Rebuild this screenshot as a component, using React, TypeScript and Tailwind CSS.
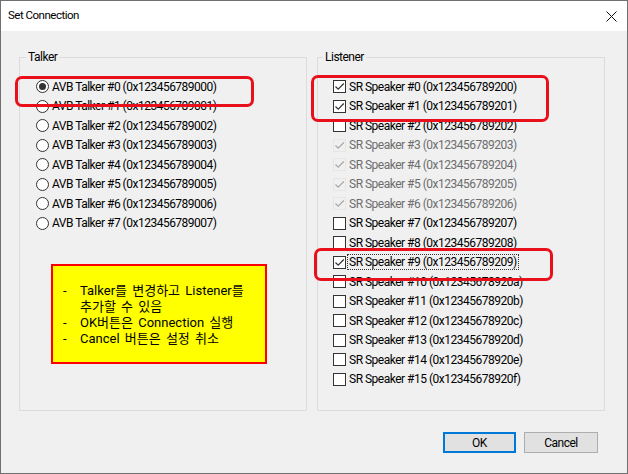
import React from "react";

const talkers = Array.from({ length: 8 }, (_, i) => ({
  label: `AVB Talker #${i} (0x12345678900${i})`,
  selected: i === 0,
}));

const hex = "0123456789abcdef";
const listeners = Array.from({ length: 16 }, (_, i) => {
  const id = i < 10 ? `0x12345678920${i}` : `0x12345678920${hex[i]}`;
  const disabled = i >= 3 && i <= 6;
  const checked = i === 0 || i === 1 || i === 9 || disabled;
  return { label: `SR Speaker #${i} (${id})`, checked, disabled, focus: i === 9 };
});

function Radio({ selected }: { selected: boolean }) {
  return (
    <span className="w-[13px] h-[13px] rounded-full border border-[#333333] bg-white flex items-center justify-center shrink-0">
      {selected && <span className="w-[7px] h-[7px] rounded-full bg-[#333333]" />}
    </span>
  );
}

function Check({ checked, disabled }: { checked: boolean; disabled: boolean }) {
  return (
    <span
      className={
        disabled
          ? "w-[13px] h-[13px] border border-[#e6e6e6] bg-[#f0f0f0] flex items-center justify-center shrink-0"
          : "w-[13px] h-[13px] border border-[#333333] bg-white flex items-center justify-center shrink-0"
      }
    >
      {checked && (
        <svg width="11" height="11" viewBox="0 0 11 11">
          <path
            d="M1.5 5.5 L4.2 8.2 L9.8 2.5"
            fill="none"
            stroke={disabled ? "#a8a8a8" : "#333333"}
            strokeWidth="1.2"
          />
        </svg>
      )}
    </span>
  );
}

export default function App() {
  return (
    <div className="w-[628px] h-[474px] border border-[#6f6f6f] bg-[#f0f0f0] flex flex-col text-[12px] tracking-[-0.5px] text-black font-['Roboto','Noto_Sans','Noto_Sans_CJK_KR',sans-serif] overflow-hidden">
      <div className="h-[30px] bg-white flex items-center justify-between pl-[7px] pr-[10px] shrink-0">
        <span className="text-[11.5px] leading-none">Set Connection</span>
        <svg width="11" height="11" viewBox="0 0 11 11">
          <path d="M0.5 0.5 L10.5 10.5 M10.5 0.5 L0.5 10.5" stroke="#111" strokeWidth="1" fill="none" />
        </svg>
      </div>

      <div className="flex-1 relative">
        <div className="flex gap-[10px] pl-[18px] pt-[26px]">
          {/* Talker group */}
          <div className="relative w-[288px] h-[354px] border border-[#dcdcdc]">
            <span className="absolute -top-[9px] left-[6px] px-[2px] bg-[#f0f0f0] leading-[16px]">Talker</span>
            <div className="flex flex-col pt-[19px] pl-[16px]">
              {talkers.map((t) => (
                <div key={t.label} className="h-[19.5px] flex items-center gap-[3px] whitespace-nowrap">
                  <Radio selected={t.selected} />
                  <span>{t.label}</span>
                </div>
              ))}
            </div>
            <div className="absolute left-[31px] top-[206px] w-[216px] h-[100px] bg-[#ffff00] border-2 border-[#ff0000] pt-[17px] pl-[10px] text-[13px] leading-[16px] tracking-normal [word-spacing:2px] font-['Roboto','Noto_Sans_CJK_KR',sans-serif]">
              <div className="flex">
                <span className="w-[17px] shrink-0">-</span>
                <span>
                  Talker를 변경하고 Listener를
                  <br />
                  추가할 수 있음
                </span>
              </div>
              <div className="flex">
                <span className="w-[17px] shrink-0">-</span>
                <span>OK버튼은 Connection 실행</span>
              </div>
              <div className="flex">
                <span className="w-[17px] shrink-0">-</span>
                <span>Cancel 버튼은 설정 취소</span>
              </div>
            </div>
          </div>

          {/* Listener group */}
          <div className="relative w-[288px] h-[354px] border border-[#dcdcdc]">
            <span className="absolute -top-[9px] left-[5px] px-[2px] bg-[#f0f0f0] leading-[16px]">Listener</span>
            <div className="flex flex-col pt-[19px] pl-[15px]">
              {listeners.map((l) => (
                <div key={l.label} className="h-[19.5px] flex items-center gap-[2px] whitespace-nowrap">
                  <Check checked={l.checked} disabled={l.disabled} />
                  <span
                    className={
                      (l.disabled ? "text-[#6d6d6d] " : "") +
                      (l.focus ? "outline outline-1 outline-dotted outline-[#333] " : "") +
                      "leading-[14px] px-[1px]"
                    }
                  >
                    {l.label}
                  </span>
                </div>
              ))}
            </div>
          </div>
        </div>

        <div className="flex justify-end gap-[8px] pr-[29px] mt-[21px]">
          <button className="w-[73px] h-[21px] border-2 border-[#0078d7] bg-[#e1e1e1] text-[12px] leading-none">OK</button>
          <button className="w-[74px] h-[21px] border border-[#adadad] bg-[#e1e1e1] text-[12px] leading-none">Cancel</button>
        </div>

        {/* annotation boxes */}
        <div className="absolute left-[14px] top-[45px] w-[239px] h-[31px] border-[3px] border-[#e8101a] rounded-[7px]" />
        <div className="absolute left-[310px] top-[44px] w-[238px] h-[47px] border-[3px] border-[#e8101a] rounded-[7px]" />
        <div className="absolute left-[313px] top-[217px] w-[239px] h-[33px] border-[3px] border-[#e8101a] rounded-[7px]" />
      </div>
    </div>
  );
}
